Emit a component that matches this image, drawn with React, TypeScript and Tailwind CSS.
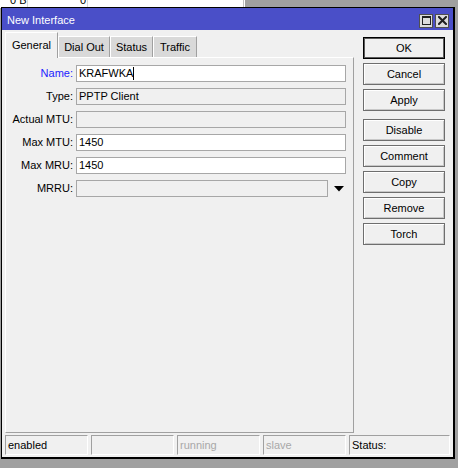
import React from "react";

const font = { fontFamily: '"Liberation Sans", Arial, sans-serif' };

function Field({
  label,
  value,
  blue,
  disabled,
  caret,
}: {
  label: string;
  value?: string;
  blue?: boolean;
  disabled?: boolean;
  caret?: boolean;
}) {
  return (
    <div className="flex items-center h-[17px]">
      <div
        className={
          "w-[67px] text-right text-[11px] leading-[17px] whitespace-nowrap " +
          (blue ? "text-[#1c1cff]" : "text-black")
        }
      >
        {label}
      </div>
      <div
        className={
          "ml-[3px] w-[270px] h-[17px] border border-[#a7a7a7] pl-[2px] text-[11px] leading-[15px] text-black flex items-center " +
          (disabled ? "bg-[#f0f0f0]" : "bg-white")
        }
      >
        <span>{value}</span>
        {caret && <span className="w-px h-[13px] bg-black" />}
      </div>
    </div>
  );
}

function Btn({ children, def }: { children: React.ReactNode; def?: boolean }) {
  return (
    <div
      className={
        "w-[82px] h-[22px] flex items-center justify-center text-[11px] text-black bg-[#f0f0f0] border " +
        (def
          ? "border-black shadow-[inset_0_0_0_1px_#5a5a5a]"
          : "border-[#6e6e6e] shadow-[inset_1px_1px_0_#ffffff,inset_-1px_-1px_0_#c8c8c8]")
      }
    >
      {children}
    </div>
  );
}

function Cell({
  children,
  w,
  grey,
}: {
  children?: React.ReactNode;
  w: string;
  grey?: boolean;
}) {
  return (
    <div
      className={
        w +
        " h-[20px] border-t border-l border-[#a0a0a0] border-b border-r border-b-white border-r-white pl-[2px] text-[11px] leading-[18px] " +
        (grey ? "text-[#a8a8a8]" : "text-black")
      }
    >
      {children}
    </div>
  );
}

export default function App() {
  return (
    <div
      className="relative w-[458px] h-[468px] overflow-hidden bg-[#a0a0a0]"
      style={font}
    >
      {/* background window content peeking */}
      <div className="absolute top-0 left-0 w-[245px] h-[8px] bg-white overflow-hidden">
        <div className="absolute top-0 left-[27px] w-px h-[8px] bg-[#d8d8d8]" />
        <div className="absolute top-0 left-[87px] w-px h-[8px] bg-[#d8d8d8]" />
        <div className="absolute top-0 left-[243px] w-px h-[8px] bg-[#c0c0c0]" />
        <div className="absolute top-[-6px] left-[10px] text-[11px] leading-[12px] text-black">
          0 B
        </div>
        <div className="absolute top-[-6px] left-[80px] text-[11px] leading-[12px] text-black">
          0
        </div>
      </div>

      {/* window */}
      <div className="absolute left-[1px] top-[7px] w-[454px] h-[452px] border-t border-l border-black border-r-2 border-b-2 flex flex-col bg-[#f0f0f0]">
        {/* title bar */}
        <div className="h-[22px] bg-[#4a4fc8] flex items-center pl-[5px] pr-[4px]">
          <div className="text-white text-[11px] leading-[14px] flex-1 mt-[1px]">
            New Interface
          </div>
          <div className="flex gap-[2px] mt-[3px]">
            <div className="w-[14px] h-[14px] bg-[#dcdcdc] border border-[#505050] flex items-center justify-center">
              <div className="w-[9px] h-[9px] border border-[#202020] border-t-2" />
            </div>
            <div className="w-[14px] h-[14px] bg-[#dcdcdc] border border-[#505050] flex items-center justify-center">
              <svg width="9" height="9" viewBox="0 0 9 9">
                <path
                  d="M1 1 L8 8 M8 1 L1 8"
                  stroke="#202020"
                  strokeWidth="2"
                  strokeLinecap="square"
                />
              </svg>
            </div>
          </div>
        </div>

        {/* body */}
        <div className="flex-1 flex flex-col pl-[3px] pb-[2px]">
          <div className="flex flex-1">
            {/* left: tabs + panel */}
            <div className="flex flex-col w-[349px] pt-[2px]">
              <div className="flex items-end h-[25px]">
                <div className="relative z-10 w-[53px] h-[26px] -mb-px bg-[#f0f0f0] border-t border-l border-white border-r border-r-[#a0a0a0] text-[11px] flex items-start pt-[4px] justify-center text-black">
                  General
                </div>
                <div className="w-[52px] h-[21px] bg-[#d9d9d9] border-t border-l border-white border-r border-r-[#a0a0a0] text-[11px] flex items-center justify-center text-black">
                  Dial Out
                </div>
                <div className="w-[43px] h-[21px] bg-[#d9d9d9] border-t border-l border-white border-r border-r-[#a0a0a0] text-[11px] flex items-center justify-center text-black">
                  Status
                </div>
                <div className="w-[44px] h-[21px] bg-[#d9d9d9] border-t border-l border-white border-r border-r-[#a0a0a0] text-[11px] flex items-center justify-center text-black">
                  Traffic
                </div>
              </div>
              <div className="flex-1 border-t border-l border-white border-r border-b border-r-[#a0a0a0] border-b-[#a0a0a0] pt-[7px] flex flex-col gap-[6px]">
                <Field label="Name:" value="KRAFWKA" blue caret />
                <Field label="Type:" value="PPTP Client" disabled />
                <Field label="Actual MTU:" disabled />
                <Field label="Max MTU:" value="1450" />
                <Field label="Max MRU:" value="1450" />
                <div className="flex items-center h-[17px]">
                  <div className="w-[67px] text-right text-[11px] leading-[17px] text-black">
                    MRRU:
                  </div>
                  <div className="ml-[3px] w-[252px] h-[17px] border border-[#a7a7a7] bg-[#f0f0f0]" />
                  <svg width="10" height="6" viewBox="0 0 10 6" className="ml-[6px] mt-[1px]">
                    <path d="M0 0 L10 0 L5 5.5 Z" fill="#000" />
                  </svg>
                </div>
              </div>
            </div>

            {/* right: buttons */}
            <div className="ml-[9px] pt-[7px] flex flex-col">
              <div className="flex flex-col gap-[4px]">
                <Btn def>OK</Btn>
                <Btn>Cancel</Btn>
                <Btn>Apply</Btn>
              </div>
              <div className="flex flex-col gap-[4px] mt-[8px]">
                <Btn>Disable</Btn>
                <Btn>Comment</Btn>
                <Btn>Copy</Btn>
                <Btn>Remove</Btn>
                <Btn>Torch</Btn>
              </div>
            </div>
          </div>

          {/* status bar */}
          <div className="flex gap-[3px] mt-[2px]">
            <Cell w="w-[83px]">enabled</Cell>
            <Cell w="w-[83px]" />
            <Cell w="w-[83px]" grey>
              running
            </Cell>
            <Cell w="w-[83px]" grey>
              slave
            </Cell>
            <Cell w="w-[101px]">Status:</Cell>
          </div>
        </div>
      </div>
    </div>
  );
}
